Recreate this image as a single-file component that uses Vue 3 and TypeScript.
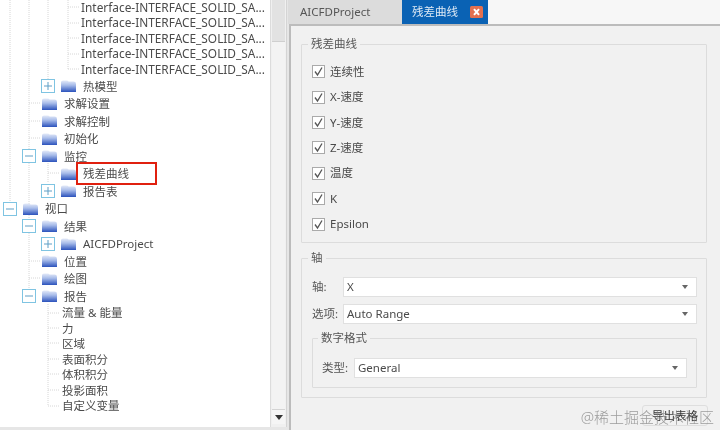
<script setup lang="ts">
interface TreeRow {
  text: string
  kind: 'leaf' | 'folder'
  depth?: number
  expander?: 'plus' | 'minus'
  left?: number
  marked?: boolean
  wide?: boolean
}

const interfaceName = 'Interface-INTERFACE_SOLID_SA...'
const rows: TreeRow[] = [
  { text: interfaceName, kind: 'leaf', left: 81, wide: true },
  { text: interfaceName, kind: 'leaf', left: 81, wide: true },
  { text: interfaceName, kind: 'leaf', left: 81, wide: true },
  { text: interfaceName, kind: 'leaf', left: 81, wide: true },
  { text: interfaceName, kind: 'leaf', left: 81, wide: true },
  { text: '热模型', kind: 'folder', depth: 2, expander: 'plus' },
  { text: '求解设置', kind: 'folder', depth: 1 },
  { text: '求解控制', kind: 'folder', depth: 1 },
  { text: '初始化', kind: 'folder', depth: 1 },
  { text: '监控', kind: 'folder', depth: 1, expander: 'minus' },
  { text: '残差曲线', kind: 'folder', depth: 2, marked: true },
  { text: '报告表', kind: 'folder', depth: 2, expander: 'plus' },
  { text: '视口', kind: 'folder', depth: 0, expander: 'minus' },
  { text: '结果', kind: 'folder', depth: 1, expander: 'minus' },
  { text: 'AICFDProject', kind: 'folder', depth: 2, expander: 'plus' },
  { text: '位置', kind: 'folder', depth: 1 },
  { text: '绘图', kind: 'folder', depth: 1 },
  { text: '报告', kind: 'folder', depth: 1, expander: 'minus' },
  { text: '流量 & 能量', kind: 'leaf', left: 62 },
  { text: '力', kind: 'leaf', left: 62 },
  { text: '区域', kind: 'leaf', left: 62 },
  { text: '表面积分', kind: 'leaf', left: 62 },
  { text: '体积积分', kind: 'leaf', left: 62 },
  { text: '投影面积', kind: 'leaf', left: 62 },
  { text: '自定义变量', kind: 'leaf', left: 62 },
]

const rowPadding = (r: TreeRow) =>
  r.kind === 'leaf' ? `${r.left}px` : `${3 + 19 * (r.depth ?? 0)}px`

const checks = ['连续性', 'X-速度', 'Y-速度', 'Z-速度', '温度', 'K', 'Epsilon']

const connectors = [
  'M10 0V201', 'M29 0V149', 'M29 163V219', 'M29 233V289', 'M48 0V79',
  'M68 0V69', 'M68 7H79', 'M68 23H79', 'M68 38H79', 'M68 54H79', 'M68 69H79',
  'M29 103H41', 'M29 121H41', 'M29 138H41', 'M48 163V183', 'M48 173H60',
  'M29 261H41', 'M29 278H41', 'M48 304V406',
  'M48 313H60', 'M48 328H60', 'M48 343H60', 'M48 359H60', 'M48 374H60', 'M48 390H60', 'M48 406H60',
]
</script>

<template>
  <div class="screen">
    <aside class="tree-panel">
      <div class="tree">
        <svg class="connectors" width="270" height="420" viewBox="0 0 270 420">
          <path v-for="d in connectors" :key="d" :d="d" fill="none" stroke="#d6d6d6" stroke-dasharray="1 1" />
        </svg>
        <div
          v-for="(r, i) in rows"
          :key="i"
          class="row"
          :class="r.kind"
          :style="{ paddingLeft: rowPadding(r) }"
        >
          <template v-if="r.kind === 'folder'">
            <span class="expander">
              <svg v-if="r.expander" width="14" height="14" viewBox="0 0 14 14">
                <rect x="0.5" y="0.5" width="13" height="13" fill="#fff" stroke="#7fc4e2" />
                <path d="M3 7H11" stroke="#5f9fc6" />
                <path v-if="r.expander === 'plus'" d="M7 3V11" stroke="#5f9fc6" />
              </svg>
            </span>
            <svg class="folder-icon" width="15" height="12" viewBox="0 0 15 12">
              <defs>
                <linearGradient :id="`f${i}`" x1="0" y1="0" x2="0" y2="1">
                  <stop offset="0" stop-color="#e4eaf8" />
                  <stop offset="0.4" stop-color="#a9bdea" />
                  <stop offset="1" stop-color="#2b52bc" />
                </linearGradient>
              </defs>
              <path d="M0 12V2.2Q0 0.5 2 0.5H5.5Q7 0.5 7.6 1.6H12.5Q15 1.6 15 4V12Z" :fill="`url(#f${i})`" />
            </svg>
          </template>
          <span class="label" :class="{ marked: r.marked, wide: r.wide }">{{ r.text }}</span>
        </div>
      </div>
      <div class="scrollbar">
        <div class="thumb"></div>
        <div class="track"></div>
        <div class="arrow"></div>
      </div>
    </aside>

    <main class="main">
      <nav class="tabs">
        <div class="tab">AICFDProject</div>
        <div class="tab active">
          <span>残差曲线</span>
          <span class="close">
            <svg width="13" height="12" viewBox="0 0 13 12">
              <rect width="13" height="12" rx="1.5" fill="#e2704f" />
              <path d="M4 3.2L9 8.8M9 3.2L4 8.8" stroke="#fff" stroke-width="2" />
            </svg>
          </span>
        </div>
      </nav>

      <section class="content">
        <fieldset class="group checks">
          <legend>残差曲线</legend>
          <label v-for="c in checks" :key="c" class="check">
            <span class="box">
              <svg width="13" height="13" viewBox="0 0 13 13">
                <path d="M3 6.5L5.5 10L10 2.5" fill="none" stroke="#555" stroke-width="1.3" />
              </svg>
            </span>
            <span>{{ c }}</span>
          </label>
        </fieldset>

        <fieldset class="group axis">
          <legend>轴</legend>
          <div class="field">
            <span class="field-label">轴:</span>
            <div class="combo"><span>X</span><i class="caret"></i></div>
          </div>
          <div class="field">
            <span class="field-label">选项:</span>
            <div class="combo"><span>Auto Range</span><i class="caret"></i></div>
          </div>
          <fieldset class="group number">
            <legend>数字格式</legend>
            <div class="field">
              <span class="field-label">类型:</span>
              <div class="combo"><span>General</span><i class="caret"></i></div>
            </div>
          </fieldset>
        </fieldset>

        <div class="footer">
          <button class="export" type="button">导出表格</button>
          <span class="watermark">@稀土掘金技术社区</span>
        </div>
      </section>
    </main>
  </div>
</template>

<style>
html, body { margin: 0; background: #f0f0f0; }
</style>

<style scoped>
.screen {
  width: 720px;
  height: 430px;
  display: flex;
  overflow: hidden;
  background: #e6e6e6;
  color: #4a4a4a;
  font: 11.5px/1.2 "Noto Sans", "Noto Sans CJK SC", sans-serif;
  filter: blur(0.4px);
}
.tree-panel {
  width: 287px;
  height: 427px;
  display: flex;
  background: #fff;
  flex: none;
}
.tree {
  position: relative;
  width: 270px;
  flex: none;
  overflow: hidden;
}
.connectors { position: absolute; left: 0; top: 0; }
.row {
  position: relative;
  display: flex;
  align-items: center;
  white-space: nowrap;
}
.row.leaf { height: 15.55px; }
.row.folder { height: 17.5px; }
.expander { width: 14px; height: 14px; flex: none; display: block; }
.expander svg { display: block; }
.folder-icon { margin: 0 7px 0 6px; flex: none; }
.label { position: relative; background: #fff; }
.label.wide { font-size: 11.87px; margin-top: -2px; }
.label.marked::after {
  content: "";
  position: absolute;
  left: -7px;
  top: -5px;
  width: 81px;
  height: 23px;
  box-sizing: border-box;
  border: 2px solid #e0200f;
}
.scrollbar {
  width: 17px;
  display: flex;
  flex-direction: column;
  padding: 0 1px 3px;
  background: #f0f0f0;
  border-left: 1px solid #dcdcdc;
  border-right: 1px solid #d4d4d4;
  box-sizing: border-box;
}
.thumb {
  height: 42px;
  background: #e2e2e2;
  border-bottom: 1px solid #cfcfcf;
  box-sizing: border-box;
}
.track { flex: 1; background: #f3f3f3; }
.arrow {
  height: 15px;
  position: relative;
  background: #f5f5f5;
  border-top: 1px solid #d4d4d4;
  box-sizing: border-box;
}
.arrow::after {
  content: "";
  position: absolute;
  left: 3px;
  top: 5px;
  border: 4px solid transparent;
  border-top: 5px solid #333;
  border-bottom: 0;
}
.main { flex: 1; display: flex; flex-direction: column; min-width: 0; padding-left: 1px; }
.tabs { height: 24px; display: flex; flex: none; background: #f7f7f7; }
.tab {
  width: 114px;
  display: flex;
  align-items: center;
  padding-left: 12px;
  box-sizing: border-box;
  background: #dcdcdc;
  color: #555;
}
.tab.active {
  width: 86px;
  background: #0a62b4;
  color: #dfeaf5;
  padding-left: 10px;
  gap: 12px;
}
.close, .close svg { display: block; }
.content {
  flex: 1;
  position: relative;
  margin-left: 1px;
  padding: 11px 13px 0 10px;
  background: #f1f1f1;
  border-top: 2px solid #bcbcbc;
  border-left: 2px solid #bcbcbc;
  display: flex;
  flex-direction: column;
  min-height: 0;
}
.group {
  margin: 0;
  min-width: 0;
  border: 1px solid #dcdcdc;
  border-radius: 1px;
  padding: 0;
}
.group legend {
  padding: 0 3px;
  color: #555;
  line-height: 14px;
}
.checks { height: 206px; box-sizing: border-box; padding: 8px 0 0 10px; }
.checks legend { margin-left: -4px; }
.check { display: flex; align-items: center; gap: 5px; height: 25.4px; }
.box {
  width: 11px;
  height: 11px;
  border: 1px solid #aaa;
  background: #fff;
  display: block;
}
.box svg { display: block; margin: -1px; }
.axis { margin-top: 8px; height: 147px; box-sizing: border-box; padding: 12px 9px 0 10px; }
.axis > legend { margin-left: -4px; }
.field { display: flex; align-items: center; height: 20px; margin-bottom: 7px; }
.field-label { width: 31px; flex: none; color: #555; }
.combo {
  flex: 1;
  height: 20px;
  box-sizing: border-box;
  background: #fff;
  border: 1px solid #e0e0e0;
  padding: 0 8px 0 3px;
  display: flex;
  align-items: center;
  justify-content: space-between;
}
.caret {
  width: 0;
  height: 0;
  border: 3.5px solid transparent;
  border-top: 4px solid #666;
  border-bottom: 0;
}
.number { height: 57px; box-sizing: border-box; padding: 12px 9px 0 9px; margin-top: 0; }
.number > legend { margin-left: -4px; }
.number .field { margin: 1px 0 0; }
.number .field-label { width: 32px; }
.footer { position: relative; flex: 1; }
.export {
  position: absolute;
  right: -1px;
  top: 7px;
  width: 66px;
  height: 21px;
  padding: 0;
  font: inherit;
  color: #333;
  background: #f1f1f1;
  border: 1px solid #dedede;
  border-radius: 3px;
}
.watermark {
  position: absolute;
  right: -7px;
  top: 9px;
  font-size: 15px;
  font-weight: 300;
  line-height: 20px;
  color: rgba(120, 120, 120, 0.7);
}
</style>
